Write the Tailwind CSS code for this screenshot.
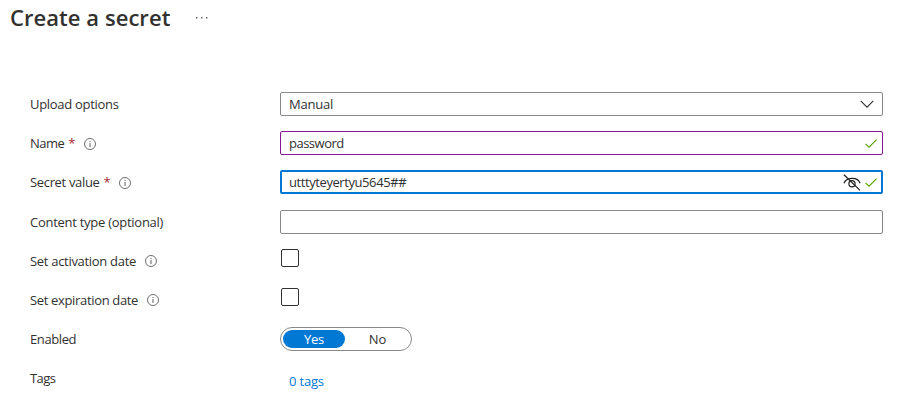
<!DOCTYPE html>
<html lang="en">
<head>
<meta charset="utf-8">
<title>Create a secret</title>
<script src="https://cdn.jsdelivr.net/npm/@tailwindcss/browser@4"></script>
</head>
<body class="h-[409px] overflow-hidden bg-white font-['Open_Sans','Noto_Sans',sans-serif] text-[13px] leading-6 tracking-[-0.3px] text-[#323130]">
<svg class="hidden">
  <symbol id="info" viewBox="0 0 12 12"><circle cx="6" cy="6" r="5.5" fill="none" stroke="#605e5c" stroke-width=".9"/><path d="M6 5v4M6 3v1" stroke="#605e5c" stroke-width="1"/></symbol>
  <symbol id="check" viewBox="0 0 12 9"><path d="M.5 4.8 4 8.2 11.6.6" fill="none" stroke="#57a300" stroke-width="1.1"/></symbol>
</svg>
<header class="flex h-[34px] items-center pl-[10px]">
  <h1 class="text-[22px] font-semibold leading-[34px] tracking-[0.05px]"><span>Create a secret</span></h1>
  <svg class="ml-[26px] mt-px h-[2px] w-[12px]" viewBox="0 0 12 2" fill="#605e5c"><path d="M0 0h1.4v1.4H0zM5 0h1.4v1.4H5zM10 0h1.4v1.4H10z"/></svg>
</header>
<main class="flex flex-col gap-[15px] pl-[30px] pr-[17px] pt-[58px]">
  <div class="flex h-6">
    <div class="w-[250px]"><span>Upload options</span></div>
    <div class="flex flex-1 items-center justify-between rounded-[2px] border border-[#8a8886] pl-2 pr-2">
      <span class="tracking-[-0.2px]">Manual</span>
      <svg class="h-[8px] w-[14px]" viewBox="0 0 14 8"><path d="M.7.8 7 7.1 13.3.8" fill="none" stroke="#323130" stroke-width="1.1"/></svg>
    </div>
  </div>
  <div class="flex h-6">
    <div class="flex w-[250px] items-center"><span class="tracking-[-0.5px]">Name</span><span class="ml-[4px] text-[#a4262c]">*</span><svg class="ml-[9px] mt-px size-3"><use href="#info"/></svg></div>
    <div class="flex flex-1 items-center justify-between rounded-[2px] border border-[#881798] pl-2 pr-[5px]">
      <span class="tracking-[-0.5px]">password</span>
      <svg class="h-[9px] w-[12px]"><use href="#check"/></svg>
    </div>
  </div>
  <div class="flex h-6">
    <div class="flex w-[250px] items-center"><span class="tracking-[-0.34px]">Secret value</span><span class="ml-[4px] text-[#a4262c]">*</span><svg class="ml-[9px] mt-px size-3"><use href="#info"/></svg></div>
    <div class="flex flex-1 items-center rounded-[2px] border-2 border-[#0078d4] pl-[7px] pr-1">
      <span class="tracking-[-0.42px]">utttyteyertyu5645##</span>
      <svg class="ml-auto mr-px h-[17px] w-[18px]" viewBox="0 0 18 17" fill="none" stroke="#201f1e" stroke-width="1.2"><path d="M1 .7 17 16.4M1 9.3C3 3.2 14.7 2.2 17 9.3"/><circle cx="9" cy="9.8" r="3.1"/></svg>
      <svg class="ml-[3px] h-[9px] w-[12px]"><use href="#check"/></svg>
    </div>
  </div>
  <div class="mt-px flex h-6">
    <div class="w-[250px]"><span class="tracking-[-0.27px]">Content type (optional)</span></div>
    <div class="flex-1 rounded-[2px] border border-[#8a8886]"></div>
  </div>
  <div class="flex h-6">
    <div class="flex w-[250px] items-center"><span>Set activation date</span><svg class="ml-[9px] size-3"><use href="#info"/></svg></div>
    <div class="ml-px size-[18px] rounded-[2px] border border-[#323130]"></div>
  </div>
  <div class="flex h-6">
    <div class="flex w-[250px] items-center"><span class="tracking-[-0.34px]">Set expiration date</span><svg class="ml-[9px] size-3"><use href="#info"/></svg></div>
    <div class="ml-px size-[18px] rounded-[2px] border border-[#323130]"></div>
  </div>
  <div class="flex h-6">
    <div class="w-[250px]"><span class="tracking-[-0.4px]">Enabled</span></div>
    <div class="flex w-[132px] items-center rounded-full border border-[#8a8886] p-[2px] text-center">
      <div class="h-[18px] w-[62px] rounded-full bg-[#0078d4] leading-[18px] text-white"><span>Yes</span></div>
      <div class="flex-1 pl-px leading-[18px] tracking-normal"><span>No</span></div>
    </div>
  </div>
  <div class="flex h-6">
    <div class="w-[259px]"><span class="tracking-[-0.6px]">Tags</span></div>
    <a class="pt-[3px] tracking-[-0.18px] text-[#0078d4]"><span>0 tags</span></a>
  </div>
</main>
</body>
</html>
